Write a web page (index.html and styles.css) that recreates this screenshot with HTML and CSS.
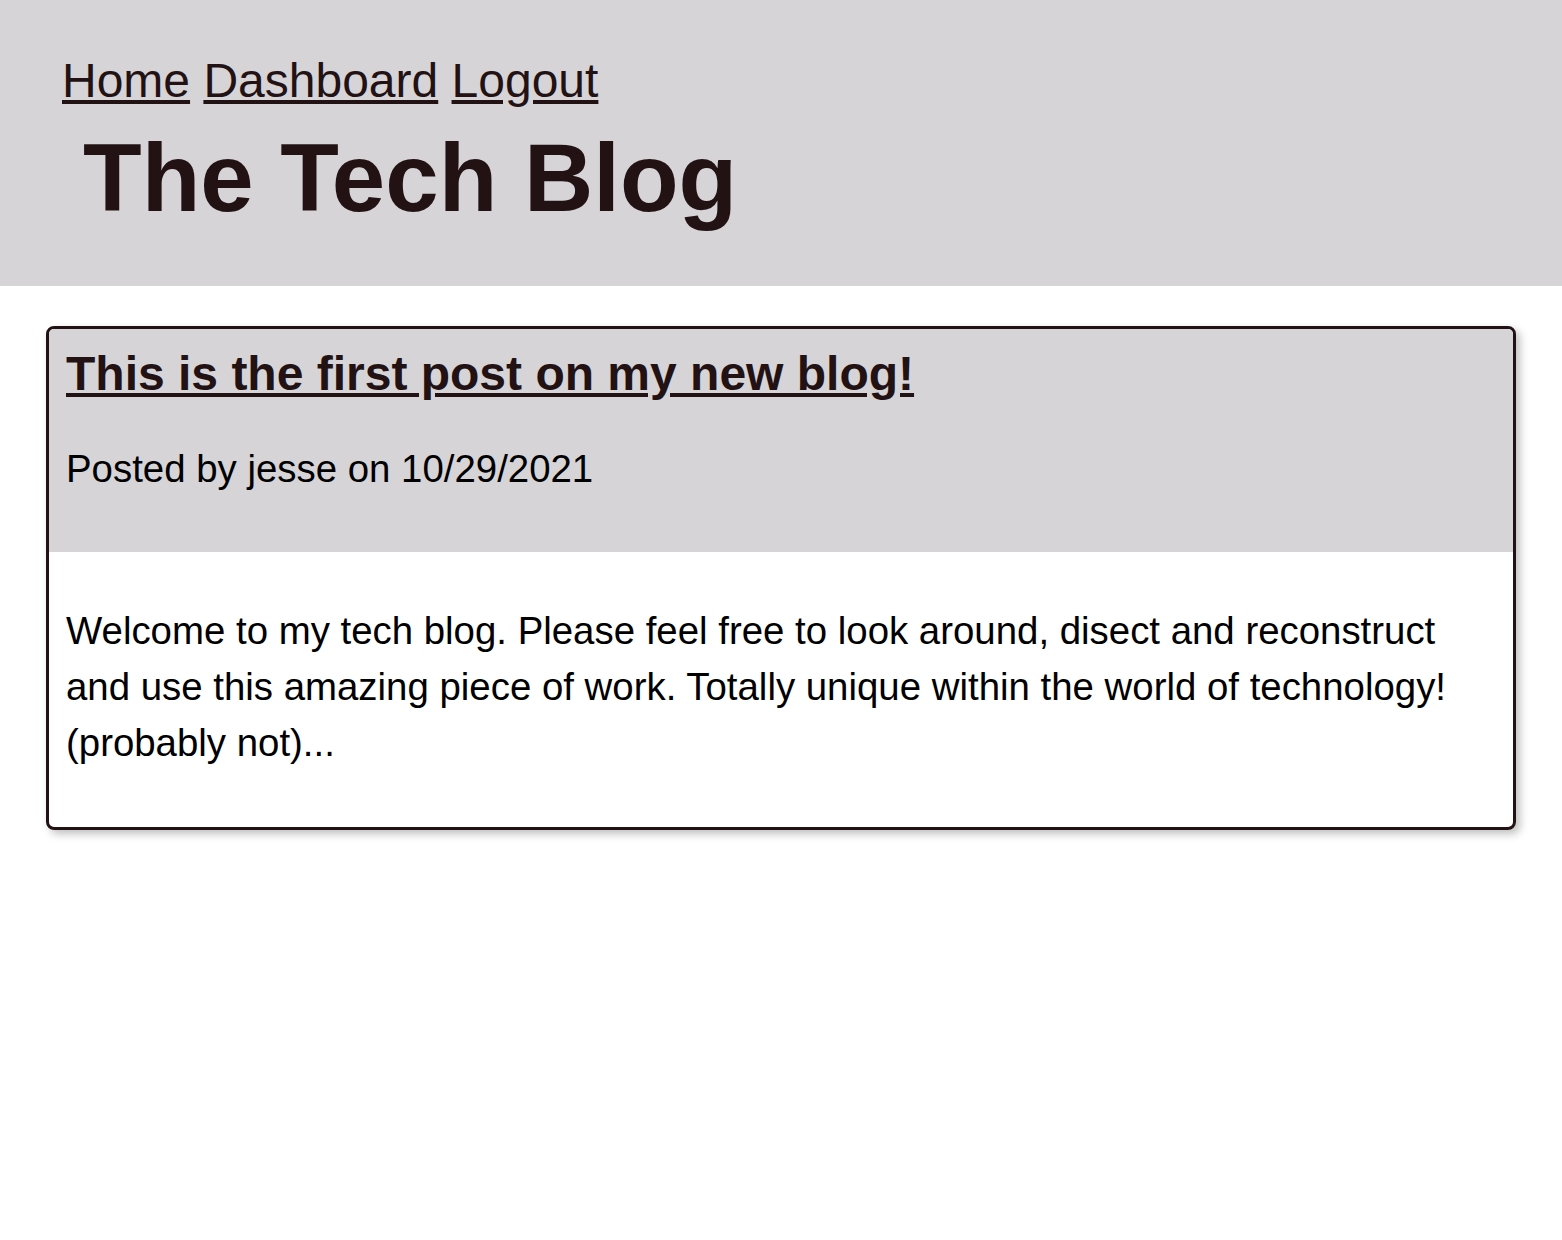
FILE: index.html
```html
<!DOCTYPE html>
<html lang="en">
<head>
<meta charset="utf-8">
<title>The Tech Blog</title>
<link rel="stylesheet" href="styles.css">
</head>
<body>
<header class="site-header">
  <nav class="nav">
    <a href="#">Home</a>
    <a href="#">Dashboard</a>
    <a href="#">Logout</a>
  </nav>
  <h1 class="site-title">The Tech Blog</h1>
</header>
<main class="main">
  <article class="post">
    <div class="post-head">
      <h2 class="post-title"><a href="#">This is the first post on my new blog!</a></h2>
      <p class="post-meta">Posted by jesse on 10/29/2021</p>
    </div>
    <div class="post-body">
      <p>Welcome to my tech blog. Please feel free to look around, disect and reconstruct and use this amazing piece of work. Totally unique within the world of technology! (probably not)...</p>
    </div>
  </article>
</main>
</body>
</html>
```

FILE: styles.css
```css
* { box-sizing: border-box; }

html, body {
  margin: 0;
  padding: 0;
  background: #ffffff;
  font-family: "Liberation Sans", Arial, sans-serif;
  color: #000;
}

.site-header {
  background: #d6d4d7;
  padding: 53px 62px 52px;
}

.nav {
  font-size: 48px;
  line-height: 56px;
  height: 56px;
}

.nav a {
  color: #221214;
  text-decoration: underline;
}

.site-title {
  margin: 13px 0 0;
  padding-left: 21px;
  font-size: 96px;
  line-height: 112px;
  font-weight: 700;
  color: #221214;
}

.main {
  padding: 40px 46px;
}

.post {
  border: 3px solid #221214;
  border-radius: 8px;
  overflow: hidden;
  box-shadow: 4px 4px 8px rgba(0, 0, 0, 0.25);
}

.post-head {
  background: #d6d4d7;
  padding: 17px 16px 55px 17px;
}

.post-title {
  margin: 0;
  font-size: 48px;
  line-height: 56px;
  font-weight: 700;
}

.post-title a {
  color: #221214;
  text-decoration: underline;
}

.post-meta {
  margin: 39px 0 0;
  font-size: 38.4px;
  line-height: 56px;
}

.post-body {
  padding: 51px 16px 56px 17px;
}

.post-body p {
  margin: 0;
  font-size: 38.4px;
  line-height: 56px;
}
```
